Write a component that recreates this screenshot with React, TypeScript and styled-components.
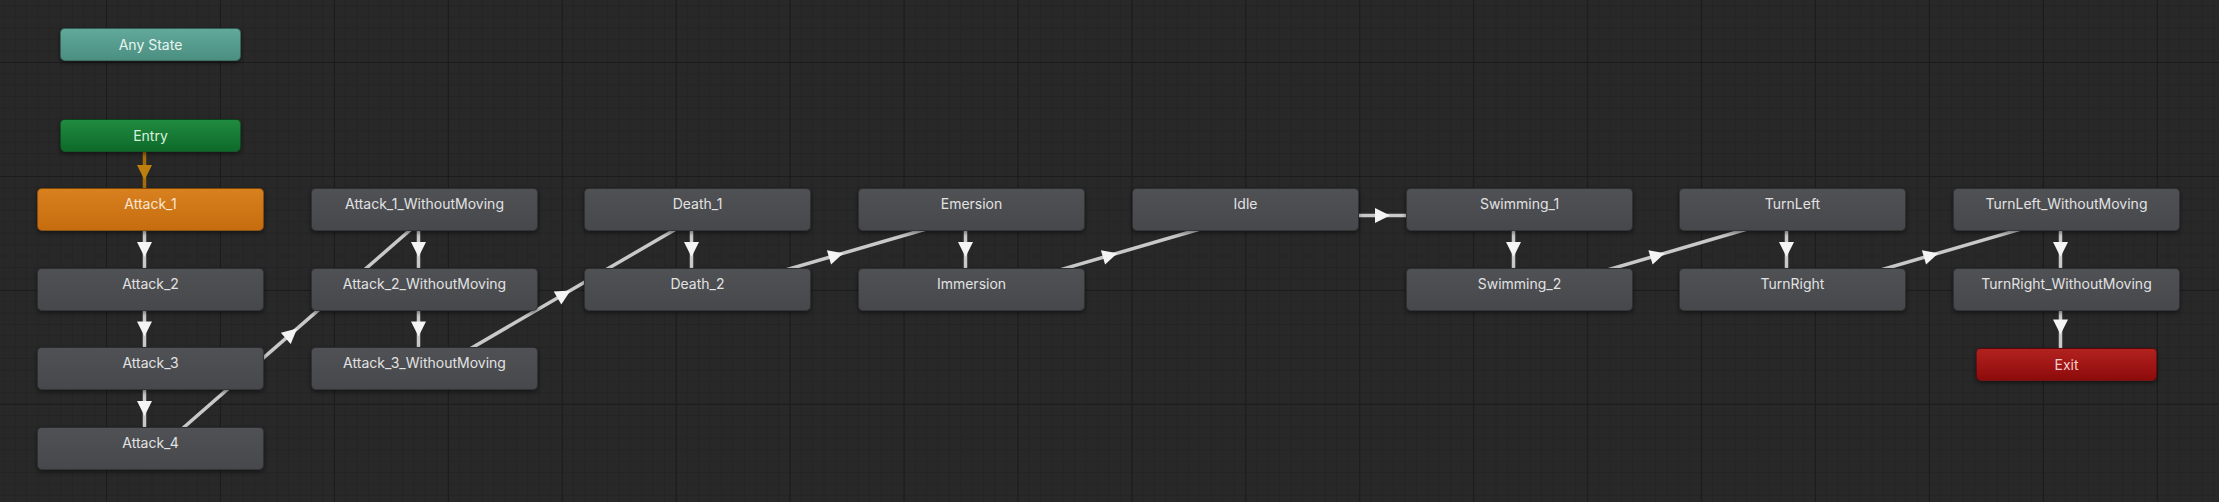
import styled, { createGlobalStyle, css } from "styled-components";

const GlobalStyle = createGlobalStyle`
  html, body {
    margin: 0;
    padding: 0;
    background: #272727;
    overflow: hidden;
  }
`;

type Kind = "state" | "default" | "any" | "entry" | "exit";

type Rect = { x: number; y: number; w: number; h: number };

type StateNode = Rect & { id: string; label: string; kind: Kind };

const COL_X = 37;
const COL_PITCH = 273.71;
const ROW_Y = 188;
const ROW_PITCH = 79.67;
const NODE_W = 227;
const NODE_H = 43;

const cell = (id: string, col: number, row: number, kind: Kind = "state"): StateNode => ({
  id,
  label: id,
  kind,
  x: Math.round(COL_X + col * COL_PITCH),
  y: Math.round(ROW_Y + row * ROW_PITCH),
  w: NODE_W,
  h: NODE_H,
});

const nodes: StateNode[] = [
  { id: "Any State", label: "Any State", kind: "any", x: 60, y: 28, w: 181, h: 33 },
  { id: "Entry", label: "Entry", kind: "entry", x: 60, y: 119, w: 181, h: 33 },
  cell("Attack_1", 0, 0, "default"),
  cell("Attack_2", 0, 1),
  cell("Attack_3", 0, 2),
  cell("Attack_4", 0, 3),
  cell("Attack_1_WithoutMoving", 1, 0),
  cell("Attack_2_WithoutMoving", 1, 1),
  cell("Attack_3_WithoutMoving", 1, 2),
  cell("Death_1", 2, 0),
  cell("Death_2", 2, 1),
  cell("Emersion", 3, 0),
  cell("Immersion", 3, 1),
  cell("Idle", 4, 0),
  cell("Swimming_1", 5, 0),
  cell("Swimming_2", 5, 1),
  cell("TurnLeft", 6, 0),
  cell("TurnRight", 6, 1),
  cell("TurnLeft_WithoutMoving", 7, 0),
  cell("TurnRight_WithoutMoving", 7, 1),
  { id: "Exit", label: "Exit", kind: "exit", x: 1976, y: 348, w: 181, h: 33 },
];

const transitions: [string, string][] = [
  ["Attack_1", "Attack_2"],
  ["Attack_2", "Attack_3"],
  ["Attack_3", "Attack_4"],
  ["Attack_4", "Attack_1_WithoutMoving"],
  ["Attack_1_WithoutMoving", "Attack_2_WithoutMoving"],
  ["Attack_2_WithoutMoving", "Attack_3_WithoutMoving"],
  ["Attack_3_WithoutMoving", "Death_1"],
  ["Death_1", "Death_2"],
  ["Death_2", "Emersion"],
  ["Emersion", "Immersion"],
  ["Immersion", "Idle"],
  ["Idle", "Swimming_1"],
  ["Swimming_1", "Swimming_2"],
  ["Swimming_2", "TurnLeft"],
  ["TurnLeft", "TurnRight"],
  ["TurnRight", "TurnLeft_WithoutMoving"],
  ["TurnLeft_WithoutMoving", "TurnRight_WithoutMoving"],
  ["TurnRight_WithoutMoving", "Exit"],
];

const byId = Object.fromEntries(nodes.map((n) => [n.id, n]));
const center = (r: Rect) => ({ x: r.x + r.w / 2, y: r.y + r.h / 2 });

// unity shifts every transition 6px to the right of its direction
function edgeGeometry(from: Rect, to: Rect) {
  const a = center(from);
  const b = center(to);
  const dx = b.x - a.x;
  const dy = b.y - a.y;
  const len = Math.hypot(dx, dy);
  const ux = dx / len;
  const uy = dy / len;
  const px = -uy;
  const py = ux;
  const off = 6;
  const x1 = a.x + px * off;
  const y1 = a.y + py * off;
  const x2 = b.x + px * off;
  const y2 = b.y + py * off;
  const mx = (x1 + x2) / 2;
  const my = (y1 + y2) / 2;
  const s = 7.5;
  const tip = `${mx + ux * s},${my + uy * s}`;
  const l = `${mx - ux * s + px * s},${my - uy * s + py * s}`;
  const r = `${mx - ux * s - px * s},${my - uy * s - py * s}`;
  return { x1, y1, x2, y2, arrow: `${tip} ${l} ${r}` };
}

const MAJOR = 113.95;
const MINOR = MAJOR / 10;

const Canvas = styled.div`
  position: relative;
  width: 2219px;
  height: 502px;
  overflow: hidden;
  background-color: #282828;
  background-image:
    linear-gradient(to right, #1b1b1b 1px, transparent 1px),
    linear-gradient(to bottom, #1b1b1b 1px, transparent 1px),
    linear-gradient(to right, #242424 1px, transparent 1px),
    linear-gradient(to bottom, #242424 1px, transparent 1px);
  background-size:
    ${MAJOR}px ${MAJOR}px,
    ${MAJOR}px ${MAJOR}px,
    ${MINOR}px ${MINOR}px,
    ${MINOR}px ${MINOR}px;
  background-position:
    106px 62px,
    106px 62px,
    3.4px 5px,
    3.4px 5px;
`;

const EdgeLayer = styled.svg`
  position: absolute;
  inset: 0;
  width: 100%;
  height: 100%;
`;

const kindStyles: Record<Kind, ReturnType<typeof css>> = {
  state: css`
    background: linear-gradient(#4f5155, #46484b);
    color: #e2e2e2;
  `,
  default: css`
    background: linear-gradient(#d8811f, #c66c0f);
    color: #f8e6d2;
  `,
  any: css`
    background: linear-gradient(#61a99a, #4b8f81);
    color: #e8f5f1;
    align-items: center;
    padding-top: 0;
  `,
  entry: css`
    background: linear-gradient(#208b40, #0e6a2a);
    color: #d8f1de;
    align-items: center;
    padding-top: 0;
  `,
  exit: css`
    background: linear-gradient(#b2221f, #8d0b0b);
    color: #f6cccc;
    align-items: center;
    padding-top: 0;
  `,
};

const Node = styled.div<{ $kind: Kind }>`
  position: absolute;
  box-sizing: border-box;
  display: flex;
  justify-content: center;
  align-items: flex-start;
  padding-top: 6px;
  border: 1px solid rgba(0, 0, 0, 0.35);
  border-radius: 5px;
  box-shadow: 0 2px 4px rgba(0, 0, 0, 0.45);
  font-family: Inter, "Noto Sans", sans-serif;
  font-size: 14px;
  line-height: 18px;
  white-space: nowrap;
  ${(p) => kindStyles[p.$kind]}
`;

export default function App() {
  return (
    <>
      <GlobalStyle />
      <Canvas>
        <EdgeLayer viewBox="0 0 2219 502">
          {(() => {
            const e = edgeGeometry(byId["Entry"], byId["Attack_1"]);
            return (
              <g>
                <line x1={e.x1} y1={e.y1} x2={e.x2} y2={e.y2} stroke="#a36d0c" strokeWidth={3.5} />
                <polygon points={e.arrow} fill="#bd800e" />
              </g>
            );
          })()}
          {transitions.map(([a, b]) => {
            const e = edgeGeometry(byId[a], byId[b]);
            return (
              <g key={a + b}>
                <line x1={e.x1} y1={e.y1} x2={e.x2} y2={e.y2} stroke="#c9c9c9" strokeWidth={3.5} />
                <polygon points={e.arrow} fill="#f4f4f4" />
              </g>
            );
          })}
        </EdgeLayer>
        {nodes.map((n) => (
          <Node key={n.id} $kind={n.kind} style={{ left: n.x, top: n.y, width: n.w, height: n.h }}>
            {n.label}
          </Node>
        ))}
      </Canvas>
    </>
  );
}
